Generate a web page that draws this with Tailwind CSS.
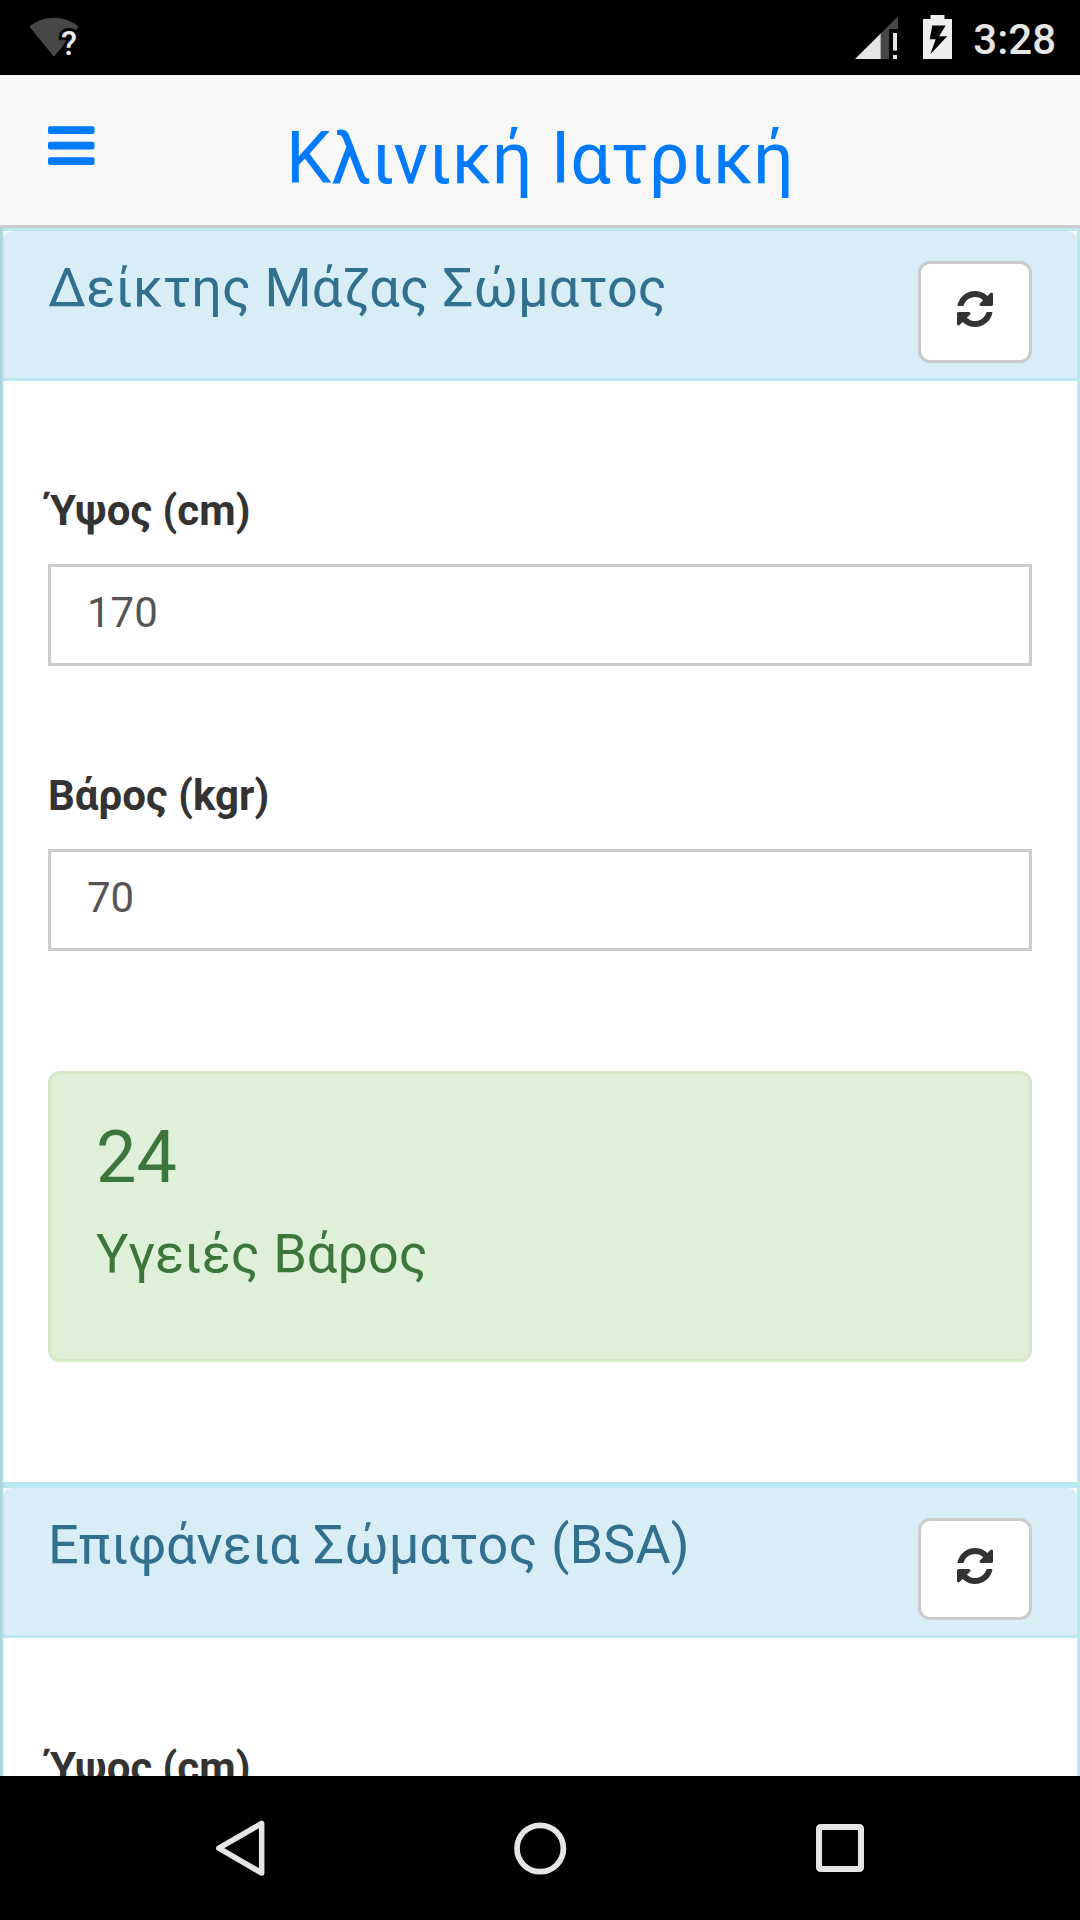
<!DOCTYPE html>
<html lang="el">
<head>
<meta charset="utf-8">
<title>Κλινική Ιατρική</title>
<script src="https://cdn.jsdelivr.net/npm/@tailwindcss/browser@4"></script>
</head>
<body class="h-[1920px] w-[1080px] overflow-hidden bg-white font-['Roboto',sans-serif] flex flex-col">
<svg class="hidden">
  <symbol id="refresh" viewBox="0 0 1536 1536"><path fill="#333" d="M1511 928q0 5-1 7-64 268-268 434.500t-478 166.500q-146 0-282.500-55t-243.500-157l-129 129q-19 19-45 19t-45-19-19-45v-448q0-26 19-45t45-19h448q26 0 45 19t19 45-19 45l-137 137q71 66 161 102t187 36q134 0 250-65t186-179q11-17 53-117 8-23 30-23h192q13 0 22.500 9.500t9.500 22.500zm25-800v448q0 26-19 45t-45 19h-448q-26 0-45-19t-19-45 19-45l138-138q-148-137-349-137-134 0-250 65t-186 179q-11 17-53 117-8 23-30 23h-199q-13 0-22.500-9.500t-9.500-22.500v-7q65-268 270-434.500t480-166.500q146 0 284 55.500t245 156.500l130-129q19-19 45-19t45 19 19 45z"/></symbol>
</svg>

<!-- Status bar -->
<div class="h-[75px] shrink-0 bg-black flex justify-between pl-6 pr-6">
  <svg class="w-[60px] h-[75px]" viewBox="24 0 60 75">
    <path d="M54 56.700 29.300 26.500Q40 17.700 54 17.700T78.700 26.500Z" fill="#474747"/>
    <text x="61" y="55" font-family="Roboto" font-weight="500" font-size="33" fill="#e8e8e8" stroke="#000" stroke-width="6" paint-order="stroke">?</text>
  </svg>
  <div class="flex">
    <svg class="w-[123px] h-[75px]" viewBox="850 0 123 75">
      <path d="M880.500 33.500 898 16.500V29H889V59H880.500Z" fill="#474747"/>
      <path d="M855 59 880.700 33.500V59Z" fill="#e5e5e5"/>
      <path d="M893 33h4v17.500h-4zM893 55h4v4h-4z" fill="#e5e5e5"/>
      <path d="M930.500 15h14v4H952V59H923V19h7.500zM932.300 25.500 929.700 39.300h6L930.300 54.300 947.300 36.300H939L945.700 25.500Z" fill="#eee" fill-rule="evenodd"/>
    </svg>
    <span class="text-[42px] leading-[79px] font-medium text-[#e5e5e5]">3:28</span>
  </div>
</div>

<!-- App header -->
<header class="h-[153px] shrink-0 bg-[#f7f7f7] border-b-3 border-[#ccc] grid grid-cols-[1fr_auto_1fr] items-start px-12">
  <svg class="mt-[51px] w-[47px] h-[39px]" viewBox="0 -0.300 47 39" fill="#007aff">
    <rect width="46.500" height="7.800" rx="2"/><rect y="15.500" width="46.500" height="7.800" rx="2"/><rect y="30.900" width="46.500" height="7.800" rx="2"/>
  </svg>
  <h1 class="mt-[54px] text-[72px] leading-[60px] tracking-[0.06px] text-[#007aff]">Κλινική Ιατρική</h1>
</header>

<main class="relative h-[1548px] shrink-0 overflow-hidden">
  <section class="border-3 border-[#bce8f1]">
    <div class="h-[150px] bg-[#d9edf7] rounded-t-[9px] border-b-3 border-[#bce8f1] flex justify-between items-start pl-[45px] pr-[45px]">
      <h2 class="mt-[27px] text-[54px] leading-[60px] tracking-[0.06px] text-[#31708f]">Δείκτης Μάζας Σώματος</h2>
      <button class="mt-[30px] w-[114px] h-[102px] bg-white border-3 border-[#ccc] rounded-xl flex justify-center pt-[27px]"><svg class="size-9"><use href="#refresh"/></svg></button>
    </div>
    <div class="px-[45px] pt-[100px] pb-[120px] flex flex-col">
      <label class="h-[83px] text-[42px] leading-[60px] tracking-[0.06px] font-bold text-[#333]">Ύψος (cm)</label>
      <div class="h-[102px] border-3 border-[#ccc] px-9 text-[42px] leading-[92px] text-[#555]">170</div>
      <label class="mt-[100px] h-[83px] text-[42px] leading-[60px] tracking-[0.06px] font-bold text-[#333]">Βάρος (kgr)</label>
      <div class="h-[102px] border-3 border-[#ccc] px-9 text-[42px] leading-[92px] text-[#555]">70</div>
      <div class="mt-[120px] h-[291px] bg-[#dff0d8] border-3 border-[#d6e9c6] rounded-xl px-[45px] pt-[44px] text-[#3c763d]">
        <div class="text-[72px] leading-[80px]">24</div>
        <div class="mt-[26px] text-[54px] leading-[60px]">Υγειές Βάρος</div>
      </div>
    </div>
  </section>
  <section class="border-3 border-[#bce8f1]">
    <div class="h-[150px] bg-[#d9edf7] rounded-t-[9px] border-b-3 border-[#bce8f1] flex justify-between items-start pl-[45px] pr-[45px]">
      <h2 class="mt-[27px] text-[54px] leading-[60px] tracking-[0.06px] text-[#31708f]">Επιφάνεια Σώματος (BSA)</h2>
      <button class="mt-[30px] w-[114px] h-[102px] bg-white border-3 border-[#ccc] rounded-xl flex justify-center pt-[27px]"><svg class="size-9"><use href="#refresh"/></svg></button>
    </div>
    <div class="px-[45px] pt-[100px] flex flex-col">
      <label class="h-[83px] text-[42px] leading-[60px] tracking-[0.06px] font-bold text-[#333]">Ύψος (cm)</label>
    </div>
  </section>
  <!-- Side menu shadow -->
  <div class="absolute left-0 top-0 h-full w-[6px] bg-linear-to-r from-black/10 to-transparent"></div>
</main>

<!-- Navigation bar -->
<nav class="h-36 shrink-0 bg-black flex justify-between px-[210px]">
  <svg class="w-[60px] h-36" viewBox="210 1776 60 144" fill="none" stroke="#e5e5e5" stroke-width="5.500" stroke-linejoin="round"><path d="M261.700 1823.500V1873L218.800 1848.200Z"/></svg>
  <svg class="w-[60px] h-36" viewBox="510 1776 60 144" fill="none" stroke="#e5e5e5" stroke-width="5.700"><circle cx="540.200" cy="1848.500" r="23.200"/></svg>
  <svg class="w-[60px] h-36" viewBox="810 1776 60 144" fill="none" stroke="#e5e5e5" stroke-width="6"><rect x="819" y="1827" width="42" height="42" rx="1.500"/></svg>
</nav>
</body>
</html>
